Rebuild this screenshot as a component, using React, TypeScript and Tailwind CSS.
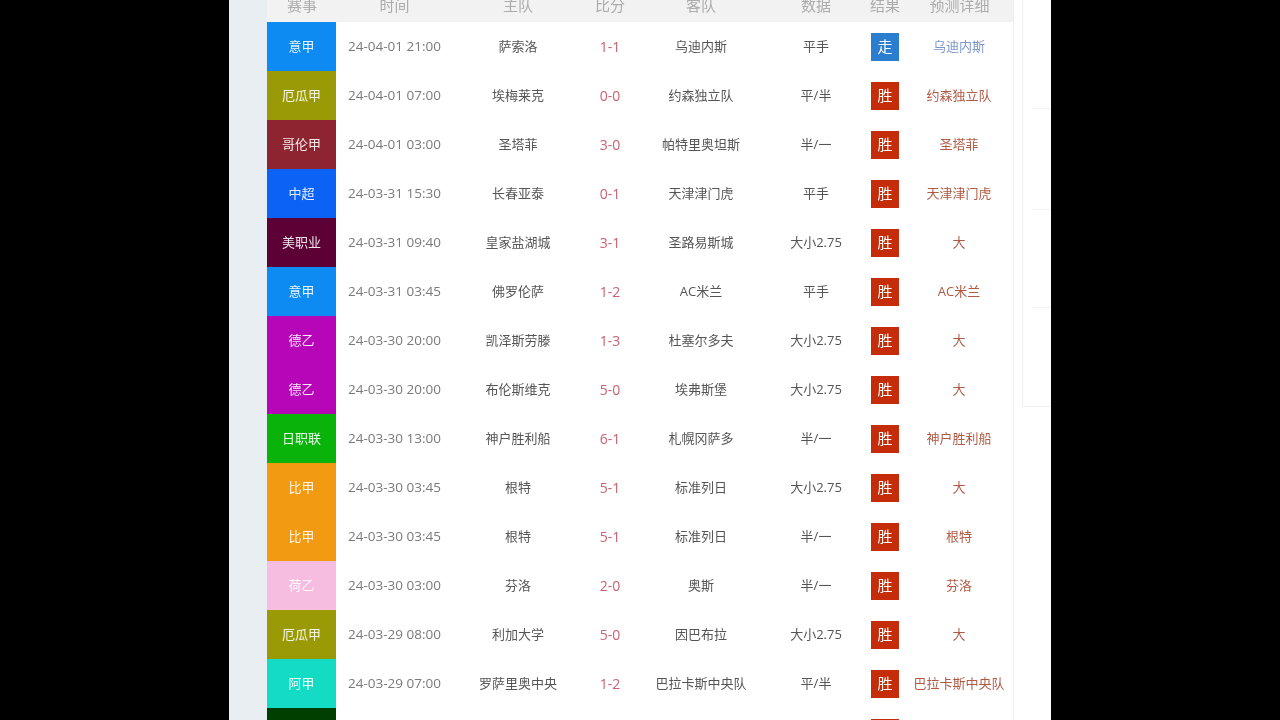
const rows = [
  { league: "意甲", color: "bg-[#0d8bf2]", time: "24-04-01 21:00", home: "萨索洛", score: "1-1", away: "乌迪内斯", data: "平手", result: "走", pick: "乌迪内斯" },
  { league: "厄瓜甲", color: "bg-[#9a9a06]", time: "24-04-01 07:00", home: "埃梅莱克", score: "0-0", away: "约森独立队", data: "平/半", result: "胜", pick: "约森独立队" },
  { league: "哥伦甲", color: "bg-[#8e2430]", time: "24-04-01 03:00", home: "圣塔菲", score: "3-0", away: "帕特里奥坦斯", data: "半/一", result: "胜", pick: "圣塔菲" },
  { league: "中超", color: "bg-[#0b62f5]", time: "24-03-31 15:30", home: "长春亚泰", score: "0-1", away: "天津津门虎", data: "平手", result: "胜", pick: "天津津门虎" },
  { league: "美职业", color: "bg-[#5c0035]", time: "24-03-31 09:40", home: "皇家盐湖城", score: "3-1", away: "圣路易斯城", data: "大小2.75", result: "胜", pick: "大" },
  { league: "意甲", color: "bg-[#0d8bf2]", time: "24-03-31 03:45", home: "佛罗伦萨", score: "1-2", away: "AC米兰", data: "平手", result: "胜", pick: "AC米兰" },
  { league: "德乙", color: "bg-[#b706b8]", time: "24-03-30 20:00", home: "凯泽斯劳滕", score: "1-3", away: "杜塞尔多夫", data: "大小2.75", result: "胜", pick: "大" },
  { league: "德乙", color: "bg-[#b706b8]", time: "24-03-30 20:00", home: "布伦斯维克", score: "5-0", away: "埃弗斯堡", data: "大小2.75", result: "胜", pick: "大" },
  { league: "日职联", color: "bg-[#0ab30a]", time: "24-03-30 13:00", home: "神户胜利船", score: "6-1", away: "札幌冈萨多", data: "半/一", result: "胜", pick: "神户胜利船" },
  { league: "比甲", color: "bg-[#f19a12]", time: "24-03-30 03:45", home: "根特", score: "5-1", away: "标准列日", data: "大小2.75", result: "胜", pick: "大" },
  { league: "比甲", color: "bg-[#f19a12]", time: "24-03-30 03:45", home: "根特", score: "5-1", away: "标准列日", data: "半/一", result: "胜", pick: "根特" },
  { league: "荷乙", color: "bg-[#f6bde0]", time: "24-03-30 03:00", home: "芬洛", score: "2-0", away: "奥斯", data: "半/一", result: "胜", pick: "芬洛" },
  { league: "厄瓜甲", color: "bg-[#9a9a06]", time: "24-03-29 08:00", home: "利加大学", score: "5-0", away: "因巴布拉", data: "大小2.75", result: "胜", pick: "大" },
  { league: "阿甲", color: "bg-[#14dcc4]", time: "24-03-29 07:00", home: "罗萨里奥中央", score: "1-2", away: "巴拉卡斯中央队", data: "平/半", result: "胜", pick: "巴拉卡斯中央队" },
  { league: "", color: "bg-[#003f00]", time: "", home: "", score: "", away: "", data: "", result: "胜", pick: "" },
];

export default function App() {
  return (
    <div className="h-[720px] overflow-hidden bg-black font-['Open_Sans','Noto_Sans_CJK_SC',sans-serif] text-[13px]">
      <div className="mx-[229px] flex h-full bg-white blur-[0.35px]">
        {/* left gutter */}
        <div className="w-[38px] shrink-0 bg-[#e9eef2]" />

        <div className="w-[747px] shrink-0 -mt-[12px] border-r border-[#f0f0f0]">
          <div className="flex h-[34px] items-center bg-[#f2f2f2] text-[15px] text-[#acacac]">
            <div className="w-[70px] text-center">赛事</div>
            <div className="w-[115px] text-center">时间</div>
            <div className="w-[132px] text-center">主队</div>
            <div className="w-[52px] text-center">比分</div>
            <div className="w-[130px] text-center">客队</div>
            <div className="w-[100px] text-center">数据</div>
            <div className="w-[38px] text-center">结果</div>
            <div className="w-[109px] pl-[2px] text-center">预测详细</div>
          </div>
          {rows.map((row, i) => (
            <div key={i} className="flex h-[49px] items-center text-[#555555]">
              <div className={`flex h-full w-[69px] items-center justify-center text-white/90 ${row.color}`}>{row.league}</div>
              <div className="w-[116px] pl-[12px] text-[13.5px] text-[#7a7a7a]">{row.time}</div>
              <div className="w-[132px] text-center">{row.home}</div>
              <div className="w-[52px] text-center text-[14px] text-[#c9626e]">{row.score}</div>
              <div className="w-[130px] text-center">{row.away}</div>
              <div className="w-[100px] text-center">{row.data}</div>
              <div className="flex w-[38px] justify-center">
                <span className={`flex h-[28px] w-[28px] items-center justify-center text-[15px] text-white ${row.result === "走" ? "bg-[#2b7dd0]" : "bg-[#c42c0a]"}`}>
                  {row.result}
                </span>
              </div>
              <div className={`w-[109px] whitespace-nowrap pl-[1px] text-center ${row.result === "走" ? "text-[#7a97cc]" : "text-[#b05a44]"}`}>{row.pick}</div>
            </div>
          ))}
        </div>

        {/* right column */}
        <div className="ml-[8px] flex-1">
          <div className="h-[407px] border-b border-l border-[#efefef]">
            <div className="ml-[9px] h-[109px] border-b border-[#f3f3f3]" />
            <div className="ml-[9px] h-[101px] border-b border-[#f3f3f3]" />
            <div className="ml-[9px] h-[98px] border-b border-[#f3f3f3]" />
          </div>
        </div>
      </div>
    </div>
  );
}
